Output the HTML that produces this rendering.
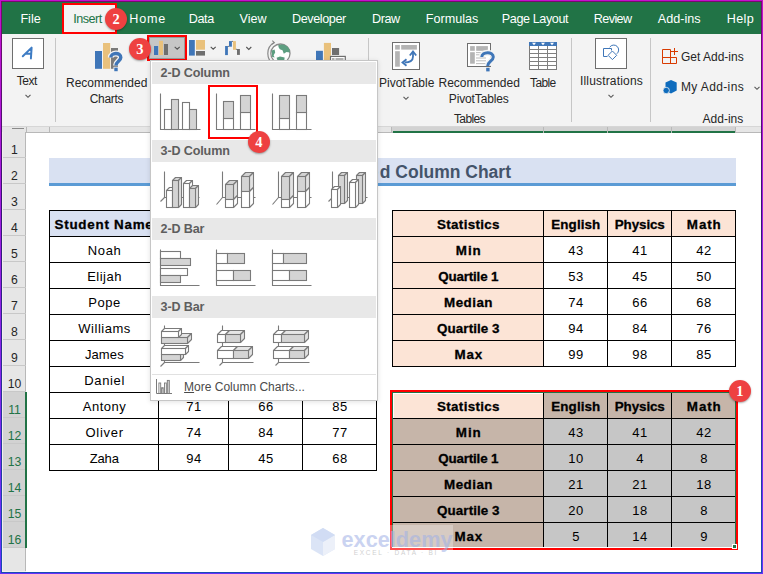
<!DOCTYPE html>
<html><head><meta charset="utf-8"><title>Excel</title><style>
*{margin:0;padding:0;box-sizing:border-box}
html,body{width:763px;height:574px;overflow:hidden;background:#fff;font-family:"Liberation Sans",sans-serif;position:relative}
.a{position:absolute}
.t{position:absolute;line-height:1;white-space:nowrap}
svg{position:absolute;overflow:visible}
</style></head><body>

<div class="a" style="left:0px;top:0px;width:763px;height:34px;background:#217346"></div>
<div class="a" style="left:63px;top:4px;width:53px;height:30px;background:#f3f3f3"></div>
<div class="t" style="left:20.40px;top:13.03px;font-size:12.6px;color:#fff;font-weight:normal;">File</div>
<div class="t" style="left:129.30px;top:13.03px;font-size:12.6px;color:#fff;font-weight:normal;letter-spacing:0.8px;">Home</div>
<div class="t" style="left:188.80px;top:13.03px;font-size:12.6px;color:#fff;font-weight:normal;letter-spacing:-0.4px;">Data</div>
<div class="t" style="left:239.50px;top:13.03px;font-size:12.6px;color:#fff;font-weight:normal;">View</div>
<div class="t" style="left:292.00px;top:13.03px;font-size:12.6px;color:#fff;font-weight:normal;letter-spacing:-0.4px;">Developer</div>
<div class="t" style="left:372.10px;top:13.03px;font-size:12.6px;color:#fff;font-weight:normal;letter-spacing:-0.43px;">Draw</div>
<div class="t" style="left:425.80px;top:13.03px;font-size:12.6px;color:#fff;font-weight:normal;">Formulas</div>
<div class="t" style="left:501.80px;top:13.03px;font-size:12.6px;color:#fff;font-weight:normal;letter-spacing:-0.4px;">Page Layout</div>
<div class="t" style="left:593.80px;top:13.03px;font-size:12.6px;color:#fff;font-weight:normal;letter-spacing:-0.6px;">Review</div>
<div class="t" style="left:657.80px;top:13.03px;font-size:12.6px;color:#fff;font-weight:normal;">Add-ins</div>
<div class="t" style="left:726.80px;top:13.03px;font-size:12.6px;color:#fff;font-weight:normal;letter-spacing:0.33px;">Help</div>
<div class="t" style="left:73.20px;top:13.03px;font-size:12.6px;color:#217346;font-weight:normal;letter-spacing:-0.5px;">Insert</div>
<div class="a" style="left:0px;top:34px;width:763px;height:92px;background:#f3f3f3"></div>
<div class="a" style="left:55.0px;top:38px;width:1px;height:84px;background:#c6c6c6"></div>
<div class="a" style="left:368.0px;top:38px;width:1px;height:84px;background:#c6c6c6"></div>
<div class="a" style="left:571.0px;top:38px;width:1px;height:84px;background:#c6c6c6"></div>
<div class="a" style="left:650.0px;top:38px;width:1px;height:84px;background:#c6c6c6"></div>
<div class="a" style="left:12px;top:38px;width:32px;height:31px;background:#fff;border:1px solid #6e6e6e"></div>
<svg style="left:12px;top:38px" width="32" height="31" viewBox="12 38 32 31"><path d="M22.8 56.2 L31.6 47.6 L30.9 58.4 M25.6 53.8 L31.2 53.8" fill="none" stroke="#3e7cc4" stroke-width="2" stroke-linecap="round" stroke-linejoin="round"/></svg>
<div class="t" style="left:16.80px;top:75.04px;font-size:12px;color:#262626;font-weight:normal;letter-spacing:-0.5px;">Text</div>
<svg style="left:23.5px;top:92.5px" width="8" height="6" viewBox="23.5 92.5 8 6"><path d="M25.0 94.3 L27.5 96.8 L30.0 94.3" fill="none" stroke="#555" stroke-width="1.1"/></svg>
<svg style="left:90px;top:38px" width="40" height="40" viewBox="90 38 40 40">
<rect x="95" y="51" width="7" height="17.8" fill="#3f76b8"/>
<rect x="103" y="43" width="7.2" height="25.8" fill="#e9c17c"/>
<rect x="111" y="48" width="7" height="20.8" fill="#7a7a7a"/>
<path d="M110.8 57.5 C110.8 52.5 120.8 52 120.8 57.5 C120.8 61 116 61.5 116 65.5" fill="none" stroke="#f3f3f3" stroke-width="6"/>
<path d="M110.8 57.5 C110.8 52.5 120.8 52 120.8 57.5 C120.8 61 116 61.5 116 65.5" fill="none" stroke="#3f76b8" stroke-width="3.4"/>
<rect x="113.5" y="66.8" width="5" height="5" fill="#f3f3f3"/>
<rect x="114.3" y="67.6" width="3.4" height="3.6" fill="#3f76b8"/>
</svg>
<div class="t" style="left:66.00px;top:76.74px;font-size:12px;color:#262626;font-weight:normal;">Recommended</div>
<div class="t" style="left:89.80px;top:92.54px;font-size:12px;color:#262626;font-weight:normal;letter-spacing:-0.34px;">Charts</div>
<div class="a" style="left:149px;top:37px;width:36px;height:22px;background:#c6c6c6;border:1px solid #9a9a9a"></div>
<div class="a" style="left:147px;top:35px;width:40px;height:26px;border:2px solid #ff0000"></div>
<svg style="left:150px;top:38px" width="40" height="22" viewBox="150 38 40 22">
<rect x="154" y="46" width="4.1" height="9" fill="#3f76b8"/>
<rect x="159" y="40.8" width="4" height="14.2" fill="#e9c17c"/>
<rect x="164" y="44" width="4" height="11" fill="#6f6f6f"/>
<path d="M174.7 46.8 L177.2 49.2 L179.7 46.8" fill="none" stroke="#555" stroke-width="1.1"/>
</svg>
<svg style="left:188px;top:38px" width="30" height="20" viewBox="188 38 30 20">
<rect x="189" y="40" width="5.8" height="15.6" fill="#3f76b8"/>
<rect x="196" y="40" width="9" height="9.7" fill="#e9c17c"/>
<rect x="196" y="51" width="9" height="4.6" fill="#6f6f6f"/>
<path d="M210.7 46.8 L213.2 49.2 L215.7 46.8" fill="none" stroke="#555" stroke-width="1.1"/>
</svg>
<svg style="left:224px;top:38px" width="30" height="20" viewBox="224 38 30 20">
<rect x="225.1" y="46" width="2.8" height="9.1" fill="#3f76b8"/>
<rect x="229" y="41.1" width="2.9" height="5.6" fill="#3f76b8"/>
<rect x="233" y="41.1" width="2.9" height="8.7" fill="#e9c17c"/>
<rect x="237" y="49" width="2.9" height="5.9" fill="#6f6f6f"/>
<path d="M227.9 46.4 H229 M231.9 41.4 H233 M235.9 49.3 H237" stroke="#555" stroke-width="0.8"/>
<path d="M246.3 47 L248.8 49.4 L251.3 47" fill="none" stroke="#555" stroke-width="1.1"/>
</svg>
<svg style="left:264px;top:38px" width="32" height="24" viewBox="264 38 32 24">
<path d="M274.05 42.57 A12.5 12.5 0 0 0 274.05 64.2" fill="none" stroke="#8a8a8a" stroke-width="1.2"/>
<path d="M272.3 40.6 L274.4 42.6 L272 44.2" fill="none" stroke="#8a8a8a" stroke-width="1.1"/>
<circle cx="280.4" cy="53.6" r="9.6" fill="#fff" stroke="#8a8a8a" stroke-width="1.3"/>
<path d="M278.2 45.2 C282 43.6 287.5 45 289.6 49.5 L289.8 52.5 L286.5 52 L283.8 53.8 L282.5 50.2 L279.8 49.2 L278.6 47.2 Z" fill="#5c9e80"/>
<path d="M271.6 50.5 L274.6 49.6 L275.2 52.6 L273.6 55.2 L274.6 57.6 L272 56.8 Z" fill="#5c9e80"/>
<path d="M276.6 57.8 L280 56.6 L284.6 57.6 L284.2 60.8 L277.6 60.8 Z" fill="#5c9e80"/>
</svg>
<svg style="left:314px;top:40px" width="34" height="22" viewBox="314 40 34 22">
<rect x="316" y="50.8" width="6.9" height="11" fill="#3f76b8"/>
<rect x="323.9" y="42.9" width="7.1" height="19" fill="#e9c17c"/>
<rect x="332" y="48" width="7.1" height="7" fill="#6f6f6f"/>
<rect x="329.9" y="55.8" width="16" height="8" fill="#fff"/>
<rect x="330.5" y="56.4" width="14.8" height="7" fill="none" stroke="#6f6f6f" stroke-width="1.2"/>
<rect x="332" y="58" width="2.5" height="4" fill="#b4b4b4"/>
<rect x="335.5" y="58" width="8" height="4" fill="#b4b4b4"/>
</svg>
<div class="a" style="left:392px;top:42px;width:28px;height:28px;background:#fff;border:1px solid #6e6e6e"></div>
<svg style="left:392px;top:42px" width="28" height="28" viewBox="392 42 28 28">
<rect x="395.1" y="45" width="4.7" height="4.6" fill="#b4b4b4"/>
<rect x="401.2" y="45" width="15.7" height="4.6" fill="#b4b4b4"/>
<rect x="395.1" y="51.2" width="4.7" height="15.5" fill="#b4b4b4"/>
<path d="M413 52.5 L413 56.5 C413 60 410 62.5 404.5 62.5" fill="none" stroke="#3f76b8" stroke-width="1.8"/>
<path d="M409.8 55.5 L413 51.5 L416.2 55.5" fill="none" stroke="#3f76b8" stroke-width="1.8"/>
<path d="M406.5 59.3 L402.5 62.5 L406.5 65.7" fill="none" stroke="#3f76b8" stroke-width="1.8"/>
</svg>
<div class="t" style="left:379.00px;top:76.94px;font-size:12px;color:#262626;font-weight:normal;">PivotTable</div>
<svg style="left:402.2px;top:95.2px" width="8" height="6" viewBox="402.2 95.2 8 6"><path d="M403.7 97.0 L406.2 99.5 L408.7 97.0" fill="none" stroke="#555" stroke-width="1.1"/></svg>
<svg style="left:466px;top:42px" width="30" height="32" viewBox="466 42 30 32">
<rect x="467.5" y="43.5" width="23" height="23" fill="#fff" stroke="#6e6e6e" stroke-width="1"/>
<rect x="470.1" y="46.1" width="4.7" height="4.7" fill="#b4b4b4"/>
<rect x="476.2" y="46.1" width="11.7" height="4.7" fill="#b4b4b4"/>
<rect x="470.1" y="52.2" width="4.7" height="11.5" fill="#b4b4b4"/>
<path d="M476 52.6 H483 M476 54.8 H482 M476 58 H486 M476 60.8 H486 M476 63.6 H486" stroke="#b4b4b4" stroke-width="0.9"/>
<path d="M481.8 57 C481.8 51.5 493.3 51 493.3 57 C493.3 61 487.7 61.5 487.7 66" fill="none" stroke="#f3f3f3" stroke-width="6"/>
<path d="M481.8 57 C481.8 51.5 493.3 51 493.3 57 C493.3 61 487.7 61.5 487.7 66" fill="none" stroke="#3f76b8" stroke-width="3"/>
<rect x="485.5" y="67" width="5" height="5.2" fill="#f3f3f3"/>
<rect x="486.2" y="67.8" width="3.4" height="3.6" fill="#3f76b8"/>
</svg>
<div class="t" style="left:438.50px;top:76.94px;font-size:12px;color:#262626;font-weight:normal;">Recommended</div>
<div class="t" style="left:448.80px;top:92.84px;font-size:12px;color:#262626;font-weight:normal;letter-spacing:-0.14px;">PivotTables</div>
<svg style="left:528px;top:40px" width="32" height="32" viewBox="528 40 32 32">
<rect x="529.5" y="42.5" width="27" height="27" fill="#fff" stroke="#7a7a7a" stroke-width="1"/>
<line x1="529.5" x2="556.5" y1="49.5" y2="49.5" stroke="#808080" stroke-width="1"/><line x1="529.5" x2="556.5" y1="53.5" y2="53.5" stroke="#808080" stroke-width="1"/><line x1="529.5" x2="556.5" y1="57.5" y2="57.5" stroke="#808080" stroke-width="1"/><line x1="529.5" x2="556.5" y1="61.5" y2="61.5" stroke="#808080" stroke-width="1"/><line x1="529.5" x2="556.5" y1="65.5" y2="65.5" stroke="#808080" stroke-width="1"/><line y1="46" y2="69.5" x1="538.5" x2="538.5" stroke="#808080" stroke-width="1"/><line y1="46" y2="69.5" x1="547.5" x2="547.5" stroke="#808080" stroke-width="1"/>
<rect x="529" y="42" width="28" height="4" fill="#3f76b8"/>
<path d="M532 42.8 L536 42.8 L534 45.2 Z M541 42.8 L545 42.8 L543 45.2 Z M550 42.8 L554 42.8 L552 45.2 Z" fill="#fff"/>
</svg>
<div class="t" style="left:530.00px;top:76.94px;font-size:12px;color:#262626;font-weight:normal;letter-spacing:-0.6px;">Table</div>
<div class="t" style="left:454.00px;top:112.64px;font-size:12px;color:#262626;font-weight:normal;letter-spacing:-0.64px;">Tables</div>
<div class="a" style="left:595px;top:38px;width:32px;height:31px;background:#fff;border:1px solid #6e6e6e"></div>
<svg style="left:595px;top:38px" width="32" height="31" viewBox="595 38 32 31">
<path d="M607.5 56.5 H603.5 V48.5 H611.5 V50.5" fill="none" stroke="#3f76b8" stroke-width="1"/>
<path d="M612.4 51 L616.7 55.3 L612.4 59.6 L608.1 55.3 Z" fill="none" stroke="#3f76b8" stroke-width="1"/>
<path d="M609.7 47.2 A4.9 4.9 0 1 1 616.85 53.75" fill="none" stroke="#3f76b8" stroke-width="1"/>
</svg>
<div class="t" style="left:580.00px;top:74.74px;font-size:12px;color:#262626;font-weight:normal;letter-spacing:0.17px;">Illustrations</div>
<svg style="left:606.5px;top:92.8px" width="8" height="6" viewBox="606.5 92.8 8 6"><path d="M608.0 94.6 L610.5 97.1 L613.0 94.6" fill="none" stroke="#555" stroke-width="1.1"/></svg>
<svg style="left:660px;top:46px" width="20" height="50" viewBox="660 46 20 50">
<path d="M662.5 49.5 V63.5 H676.5 V57.5 M662.5 49.5 H670.5 V63.5 M662.5 57.5 H676.5" fill="none" stroke="#d83b01" stroke-width="1"/>
<path d="M674.5 48 V55 M671 51.5 H678" fill="none" stroke="#d83b01" stroke-width="1"/>
<path d="M671 80 L676.7 82.5 V90.5 L671 93.5 L665.5 90.8 V82.5 Z" fill="#0f6cbd"/>
<circle cx="666.2" cy="90.5" r="3.2" fill="#0f6cbd" stroke="#f3f3f3" stroke-width="0.8"/>
</svg>
<div class="t" style="left:681.00px;top:50.64px;font-size:12px;color:#262626;font-weight:normal;">Get Add-ins</div>
<div class="t" style="left:681.00px;top:81.24px;font-size:12px;color:#262626;font-weight:normal;letter-spacing:0.37px;">My Add-ins</div>
<svg style="left:753px;top:84.5px" width="8" height="6" viewBox="753 84.5 8 6"><path d="M754.5 86.3 L757 88.8 L759.5 86.3" fill="none" stroke="#555" stroke-width="1.1"/></svg>
<div class="t" style="left:702.60px;top:112.64px;font-size:12px;color:#262626;font-weight:normal;">Add-ins</div>
<div class="a" style="left:0px;top:126px;width:763px;height:7px;background:#e6e6e6;border-top:1px solid #d6d6d6;border-bottom:1px solid #b8b8b8"></div>
<div class="a" style="left:392px;top:127px;width:344px;height:5px;background:#d2d2d2"></div>
<div class="a" style="left:393px;top:131px;width:343px;height:2px;background:#217346"></div>
<div class="a" style="left:26.0px;top:127px;width:1px;height:6px;background:#b8b8b8"></div>
<div class="a" style="left:48.8px;top:127px;width:1px;height:6px;background:#b8b8b8"></div>
<div class="a" style="left:157.5px;top:127px;width:1px;height:6px;background:#b8b8b8"></div>
<div class="a" style="left:227.5px;top:127px;width:1px;height:6px;background:#b8b8b8"></div>
<div class="a" style="left:301.5px;top:127px;width:1px;height:6px;background:#b8b8b8"></div>
<div class="a" style="left:375.5px;top:127px;width:1px;height:6px;background:#b8b8b8"></div>
<div class="a" style="left:390.5px;top:127px;width:1px;height:6px;background:#b8b8b8"></div>
<div class="a" style="left:543.0px;top:127px;width:1px;height:6px;background:#b8b8b8"></div>
<div class="a" style="left:607.0px;top:127px;width:1px;height:6px;background:#b8b8b8"></div>
<div class="a" style="left:671.0px;top:127px;width:1px;height:6px;background:#b8b8b8"></div>
<div class="a" style="left:735.0px;top:127px;width:1px;height:6px;background:#b8b8b8"></div>
<div class="a" style="left:12px;top:128px;width:12px;height:1px;background:#8a8a8a"></div>
<div class="a" style="left:2px;top:132px;width:24px;height:442px;background:#e6e6e6;border-right:1px solid #b8b8b8"></div>
<div class="a" style="left:2px;top:157px;width:24px;height:1px;background:#c8c8c8"></div>
<div class="t" style="left:2.50px;width:24px;text-align:center;top:143.67px;font-size:12.2px;color:#262626;font-weight:normal;">1</div>
<div class="a" style="left:2px;top:183px;width:24px;height:1px;background:#c8c8c8"></div>
<div class="t" style="left:2.50px;width:24px;text-align:center;top:169.67px;font-size:12.2px;color:#262626;font-weight:normal;">2</div>
<div class="a" style="left:2px;top:209px;width:24px;height:1px;background:#c8c8c8"></div>
<div class="t" style="left:2.50px;width:24px;text-align:center;top:195.67px;font-size:12.2px;color:#262626;font-weight:normal;">3</div>
<div class="a" style="left:2px;top:235px;width:24px;height:1px;background:#c8c8c8"></div>
<div class="t" style="left:2.50px;width:24px;text-align:center;top:221.67px;font-size:12.2px;color:#262626;font-weight:normal;">4</div>
<div class="a" style="left:2px;top:261px;width:24px;height:1px;background:#c8c8c8"></div>
<div class="t" style="left:2.50px;width:24px;text-align:center;top:247.67px;font-size:12.2px;color:#262626;font-weight:normal;">5</div>
<div class="a" style="left:2px;top:287px;width:24px;height:1px;background:#c8c8c8"></div>
<div class="t" style="left:2.50px;width:24px;text-align:center;top:273.67px;font-size:12.2px;color:#262626;font-weight:normal;">6</div>
<div class="a" style="left:2px;top:313px;width:24px;height:1px;background:#c8c8c8"></div>
<div class="t" style="left:2.50px;width:24px;text-align:center;top:299.67px;font-size:12.2px;color:#262626;font-weight:normal;">7</div>
<div class="a" style="left:2px;top:339px;width:24px;height:1px;background:#c8c8c8"></div>
<div class="t" style="left:2.50px;width:24px;text-align:center;top:325.67px;font-size:12.2px;color:#262626;font-weight:normal;">8</div>
<div class="a" style="left:2px;top:365px;width:24px;height:1px;background:#c8c8c8"></div>
<div class="t" style="left:2.50px;width:24px;text-align:center;top:351.67px;font-size:12.2px;color:#262626;font-weight:normal;">9</div>
<div class="a" style="left:2px;top:391px;width:24px;height:1px;background:#c8c8c8"></div>
<div class="t" style="left:2.50px;width:24px;text-align:center;top:377.67px;font-size:12.2px;color:#262626;font-weight:normal;">10</div>
<div class="a" style="left:2px;top:392px;width:24px;height:26px;background:#d2d2d2"></div>
<div class="a" style="left:2px;top:417px;width:24px;height:1px;background:#c8c8c8"></div>
<div class="t" style="left:2.50px;width:24px;text-align:center;top:403.67px;font-size:12.2px;color:#217346;font-weight:normal;">11</div>
<div class="a" style="left:2px;top:418px;width:24px;height:26px;background:#d2d2d2"></div>
<div class="a" style="left:2px;top:443px;width:24px;height:1px;background:#c8c8c8"></div>
<div class="t" style="left:2.50px;width:24px;text-align:center;top:429.67px;font-size:12.2px;color:#217346;font-weight:normal;">12</div>
<div class="a" style="left:2px;top:444px;width:24px;height:26px;background:#d2d2d2"></div>
<div class="a" style="left:2px;top:469px;width:24px;height:1px;background:#c8c8c8"></div>
<div class="t" style="left:2.50px;width:24px;text-align:center;top:455.67px;font-size:12.2px;color:#217346;font-weight:normal;">13</div>
<div class="a" style="left:2px;top:470px;width:24px;height:26px;background:#d2d2d2"></div>
<div class="a" style="left:2px;top:495px;width:24px;height:1px;background:#c8c8c8"></div>
<div class="t" style="left:2.50px;width:24px;text-align:center;top:481.67px;font-size:12.2px;color:#217346;font-weight:normal;">14</div>
<div class="a" style="left:2px;top:496px;width:24px;height:26px;background:#d2d2d2"></div>
<div class="a" style="left:2px;top:521px;width:24px;height:1px;background:#c8c8c8"></div>
<div class="t" style="left:2.50px;width:24px;text-align:center;top:507.67px;font-size:12.2px;color:#217346;font-weight:normal;">15</div>
<div class="a" style="left:2px;top:522px;width:24px;height:26px;background:#d2d2d2"></div>
<div class="a" style="left:2px;top:547px;width:24px;height:1px;background:#c8c8c8"></div>
<div class="t" style="left:2.50px;width:24px;text-align:center;top:533.67px;font-size:12.2px;color:#217346;font-weight:normal;">16</div>
<div class="a" style="left:25px;top:392px;width:2px;height:156px;background:#217346"></div>
<div class="a" style="left:49px;top:158px;width:687px;height:25px;background:#d9e1f2"></div>
<div class="a" style="left:49px;top:183px;width:687px;height:3px;background:#5b9bd5"></div>
<div class="t" style="left:11.00px;width:500px;text-align:right;top:163.79px;font-size:17.5px;color:#44546a;font-weight:bold;">Box Plot Using Stacke<span style="margin-left:1.5px"></span>d Column Chart</div>
<div class="a" style="left:49px;top:210px;width:109px;height:26px;background:#d9e1f2"></div>
<div class="t" style="left:54.50px;top:217.66px;font-size:13.4px;color:#000;font-weight:bold;letter-spacing:0.75px;-webkit-text-stroke:0.3px #000;">Student Name</div>
<div class="a" style="left:158px;top:210px;width:70px;height:26px;background:#d9e1f2"></div>
<div class="t" style="left:158.75px;width:70px;text-align:center;top:217.66px;font-size:13.4px;color:#000;font-weight:bold;letter-spacing:-0.1px;-webkit-text-stroke:0.3px #000;">Physics</div>
<div class="a" style="left:228px;top:210px;width:74px;height:26px;background:#d9e1f2"></div>
<div class="t" style="left:229.00px;width:74px;text-align:center;top:217.66px;font-size:13.4px;color:#000;font-weight:bold;letter-spacing:0.4px;-webkit-text-stroke:0.3px #000;">Chemistry</div>
<div class="a" style="left:302px;top:210px;width:74px;height:26px;background:#d9e1f2"></div>
<div class="t" style="left:303.25px;width:74px;text-align:center;top:217.66px;font-size:13.4px;color:#000;font-weight:bold;letter-spacing:0.9px;-webkit-text-stroke:0.3px #000;">Math</div>
<div class="t" style="left:50.10px;width:109px;text-align:center;top:244.00px;font-size:13px;color:#000;font-weight:normal;letter-spacing:0.6px;">Noah</div>
<div class="t" style="left:159.05px;width:70px;text-align:center;top:244.00px;font-size:13px;color:#000;font-weight:normal;letter-spacing:0.5px;">0</div>
<div class="t" style="left:229.05px;width:74px;text-align:center;top:244.00px;font-size:13px;color:#000;font-weight:normal;letter-spacing:0.5px;">0</div>
<div class="t" style="left:303.05px;width:74px;text-align:center;top:244.00px;font-size:13px;color:#000;font-weight:normal;letter-spacing:0.5px;">0</div>
<div class="t" style="left:50.05px;width:109px;text-align:center;top:270.00px;font-size:13px;color:#000;font-weight:normal;letter-spacing:0.5px;">Elijah</div>
<div class="t" style="left:159.05px;width:70px;text-align:center;top:270.00px;font-size:13px;color:#000;font-weight:normal;letter-spacing:0.5px;">0</div>
<div class="t" style="left:229.05px;width:74px;text-align:center;top:270.00px;font-size:13px;color:#000;font-weight:normal;letter-spacing:0.5px;">0</div>
<div class="t" style="left:303.05px;width:74px;text-align:center;top:270.00px;font-size:13px;color:#000;font-weight:normal;letter-spacing:0.5px;">0</div>
<div class="t" style="left:50.05px;width:109px;text-align:center;top:296.00px;font-size:13px;color:#000;font-weight:normal;letter-spacing:0.5px;">Pope</div>
<div class="t" style="left:159.05px;width:70px;text-align:center;top:296.00px;font-size:13px;color:#000;font-weight:normal;letter-spacing:0.5px;">0</div>
<div class="t" style="left:229.05px;width:74px;text-align:center;top:296.00px;font-size:13px;color:#000;font-weight:normal;letter-spacing:0.5px;">0</div>
<div class="t" style="left:303.05px;width:74px;text-align:center;top:296.00px;font-size:13px;color:#000;font-weight:normal;letter-spacing:0.5px;">0</div>
<div class="t" style="left:50.05px;width:109px;text-align:center;top:322.00px;font-size:13px;color:#000;font-weight:normal;letter-spacing:0.5px;">Williams</div>
<div class="t" style="left:159.05px;width:70px;text-align:center;top:322.00px;font-size:13px;color:#000;font-weight:normal;letter-spacing:0.5px;">0</div>
<div class="t" style="left:229.05px;width:74px;text-align:center;top:322.00px;font-size:13px;color:#000;font-weight:normal;letter-spacing:0.5px;">0</div>
<div class="t" style="left:303.05px;width:74px;text-align:center;top:322.00px;font-size:13px;color:#000;font-weight:normal;letter-spacing:0.5px;">0</div>
<div class="t" style="left:49.85px;width:109px;text-align:center;top:348.00px;font-size:13px;color:#000;font-weight:normal;letter-spacing:0.1px;">James</div>
<div class="t" style="left:159.05px;width:70px;text-align:center;top:348.00px;font-size:13px;color:#000;font-weight:normal;letter-spacing:0.5px;">0</div>
<div class="t" style="left:229.05px;width:74px;text-align:center;top:348.00px;font-size:13px;color:#000;font-weight:normal;letter-spacing:0.5px;">0</div>
<div class="t" style="left:303.05px;width:74px;text-align:center;top:348.00px;font-size:13px;color:#000;font-weight:normal;letter-spacing:0.5px;">0</div>
<div class="t" style="left:50.12px;width:109px;text-align:center;top:374.00px;font-size:13px;color:#000;font-weight:normal;letter-spacing:0.65px;">Daniel</div>
<div class="t" style="left:159.05px;width:70px;text-align:center;top:374.00px;font-size:13px;color:#000;font-weight:normal;letter-spacing:0.5px;">0</div>
<div class="t" style="left:229.05px;width:74px;text-align:center;top:374.00px;font-size:13px;color:#000;font-weight:normal;letter-spacing:0.5px;">0</div>
<div class="t" style="left:303.05px;width:74px;text-align:center;top:374.00px;font-size:13px;color:#000;font-weight:normal;letter-spacing:0.5px;">0</div>
<div class="t" style="left:50.05px;width:109px;text-align:center;top:400.00px;font-size:13px;color:#000;font-weight:normal;letter-spacing:0.5px;">Antony</div>
<div class="t" style="left:159.05px;width:70px;text-align:center;top:400.00px;font-size:13px;color:#000;font-weight:normal;letter-spacing:0.5px;">71</div>
<div class="t" style="left:229.05px;width:74px;text-align:center;top:400.00px;font-size:13px;color:#000;font-weight:normal;letter-spacing:0.5px;">66</div>
<div class="t" style="left:303.05px;width:74px;text-align:center;top:400.00px;font-size:13px;color:#000;font-weight:normal;letter-spacing:0.5px;">85</div>
<div class="t" style="left:50.17px;width:109px;text-align:center;top:426.00px;font-size:13px;color:#000;font-weight:normal;letter-spacing:0.75px;">Oliver</div>
<div class="t" style="left:159.05px;width:70px;text-align:center;top:426.00px;font-size:13px;color:#000;font-weight:normal;letter-spacing:0.5px;">74</div>
<div class="t" style="left:229.05px;width:74px;text-align:center;top:426.00px;font-size:13px;color:#000;font-weight:normal;letter-spacing:0.5px;">84</div>
<div class="t" style="left:303.05px;width:74px;text-align:center;top:426.00px;font-size:13px;color:#000;font-weight:normal;letter-spacing:0.5px;">77</div>
<div class="t" style="left:49.75px;width:109px;text-align:center;top:452.00px;font-size:13px;color:#000;font-weight:normal;letter-spacing:-0.1px;">Zaha</div>
<div class="t" style="left:159.05px;width:70px;text-align:center;top:452.00px;font-size:13px;color:#000;font-weight:normal;letter-spacing:0.5px;">94</div>
<div class="t" style="left:229.05px;width:74px;text-align:center;top:452.00px;font-size:13px;color:#000;font-weight:normal;letter-spacing:0.5px;">45</div>
<div class="t" style="left:303.05px;width:74px;text-align:center;top:452.00px;font-size:13px;color:#000;font-weight:normal;letter-spacing:0.5px;">68</div>
<div class="a" style="left:49px;top:210px;width:328px;height:1px;background:#000"></div>
<div class="a" style="left:49px;top:236px;width:328px;height:1px;background:#000"></div>
<div class="a" style="left:49px;top:262px;width:328px;height:1px;background:#000"></div>
<div class="a" style="left:49px;top:288px;width:328px;height:1px;background:#000"></div>
<div class="a" style="left:49px;top:314px;width:328px;height:1px;background:#000"></div>
<div class="a" style="left:49px;top:340px;width:328px;height:1px;background:#000"></div>
<div class="a" style="left:49px;top:366px;width:328px;height:1px;background:#000"></div>
<div class="a" style="left:49px;top:392px;width:328px;height:1px;background:#000"></div>
<div class="a" style="left:49px;top:418px;width:328px;height:1px;background:#000"></div>
<div class="a" style="left:49px;top:444px;width:328px;height:1px;background:#000"></div>
<div class="a" style="left:49px;top:470px;width:328px;height:1px;background:#000"></div>
<div class="a" style="left:49px;top:210px;width:1px;height:261px;background:#000"></div>
<div class="a" style="left:158px;top:210px;width:1px;height:261px;background:#000"></div>
<div class="a" style="left:228px;top:210px;width:1px;height:261px;background:#000"></div>
<div class="a" style="left:302px;top:210px;width:1px;height:261px;background:#000"></div>
<div class="a" style="left:376px;top:210px;width:1px;height:261px;background:#000"></div>
<div class="a" style="left:392px;top:210px;width:151px;height:26px;background:#fce4d6"></div>
<div class="t" style="left:392.97px;width:151px;text-align:center;top:217.66px;font-size:13.4px;color:#000;font-weight:bold;letter-spacing:0.33px;-webkit-text-stroke:0.3px #000;">Statistics</div>
<div class="a" style="left:543px;top:210px;width:64px;height:26px;background:#fce4d6"></div>
<div class="t" style="left:543.85px;width:64px;text-align:center;top:217.66px;font-size:13.4px;color:#000;font-weight:bold;letter-spacing:0.1px;-webkit-text-stroke:0.3px #000;">English</div>
<div class="a" style="left:607px;top:210px;width:64px;height:26px;background:#fce4d6"></div>
<div class="t" style="left:607.75px;width:64px;text-align:center;top:217.66px;font-size:13.4px;color:#000;font-weight:bold;letter-spacing:-0.1px;-webkit-text-stroke:0.3px #000;">Physics</div>
<div class="a" style="left:671px;top:210px;width:64px;height:26px;background:#fce4d6"></div>
<div class="t" style="left:672.25px;width:64px;text-align:center;top:217.66px;font-size:13.4px;color:#000;font-weight:bold;letter-spacing:0.9px;-webkit-text-stroke:0.3px #000;">Math</div>
<div class="a" style="left:392px;top:236px;width:151px;height:26px;background:#fce4d6"></div>
<div class="t" style="left:393.25px;width:151px;text-align:center;top:243.66px;font-size:13.4px;color:#000;font-weight:bold;letter-spacing:0.9px;-webkit-text-stroke:0.3px #000;">Min</div>
<div class="t" style="left:544.05px;width:64px;text-align:center;top:244.00px;font-size:13px;color:#000;font-weight:normal;letter-spacing:0.5px;">43</div>
<div class="t" style="left:608.05px;width:64px;text-align:center;top:244.00px;font-size:13px;color:#000;font-weight:normal;letter-spacing:0.5px;">41</div>
<div class="t" style="left:672.05px;width:64px;text-align:center;top:244.00px;font-size:13px;color:#000;font-weight:normal;letter-spacing:0.5px;">42</div>
<div class="a" style="left:392px;top:262px;width:151px;height:26px;background:#fce4d6"></div>
<div class="t" style="left:392.72px;width:151px;text-align:center;top:269.66px;font-size:13.4px;color:#000;font-weight:bold;letter-spacing:-0.16px;-webkit-text-stroke:0.3px #000;">Quartile 1</div>
<div class="t" style="left:544.05px;width:64px;text-align:center;top:270.00px;font-size:13px;color:#000;font-weight:normal;letter-spacing:0.5px;">53</div>
<div class="t" style="left:608.05px;width:64px;text-align:center;top:270.00px;font-size:13px;color:#000;font-weight:normal;letter-spacing:0.5px;">45</div>
<div class="t" style="left:672.05px;width:64px;text-align:center;top:270.00px;font-size:13px;color:#000;font-weight:normal;letter-spacing:0.5px;">50</div>
<div class="a" style="left:392px;top:288px;width:151px;height:26px;background:#fce4d6"></div>
<div class="t" style="left:393.03px;width:151px;text-align:center;top:295.66px;font-size:13.4px;color:#000;font-weight:bold;letter-spacing:0.46px;-webkit-text-stroke:0.3px #000;">Median</div>
<div class="t" style="left:544.05px;width:64px;text-align:center;top:296.00px;font-size:13px;color:#000;font-weight:normal;letter-spacing:0.5px;">74</div>
<div class="t" style="left:608.05px;width:64px;text-align:center;top:296.00px;font-size:13px;color:#000;font-weight:normal;letter-spacing:0.5px;">66</div>
<div class="t" style="left:672.05px;width:64px;text-align:center;top:296.00px;font-size:13px;color:#000;font-weight:normal;letter-spacing:0.5px;">68</div>
<div class="a" style="left:392px;top:314px;width:151px;height:26px;background:#fce4d6"></div>
<div class="t" style="left:392.84px;width:151px;text-align:center;top:321.66px;font-size:13.4px;color:#000;font-weight:bold;letter-spacing:0.07px;-webkit-text-stroke:0.3px #000;">Quartile 3</div>
<div class="t" style="left:544.05px;width:64px;text-align:center;top:322.00px;font-size:13px;color:#000;font-weight:normal;letter-spacing:0.5px;">94</div>
<div class="t" style="left:608.05px;width:64px;text-align:center;top:322.00px;font-size:13px;color:#000;font-weight:normal;letter-spacing:0.5px;">84</div>
<div class="t" style="left:672.05px;width:64px;text-align:center;top:322.00px;font-size:13px;color:#000;font-weight:normal;letter-spacing:0.5px;">76</div>
<div class="a" style="left:392px;top:340px;width:151px;height:26px;background:#fce4d6"></div>
<div class="t" style="left:393.25px;width:151px;text-align:center;top:347.66px;font-size:13.4px;color:#000;font-weight:bold;letter-spacing:0.9px;-webkit-text-stroke:0.3px #000;">Max</div>
<div class="t" style="left:544.05px;width:64px;text-align:center;top:348.00px;font-size:13px;color:#000;font-weight:normal;letter-spacing:0.5px;">99</div>
<div class="t" style="left:608.05px;width:64px;text-align:center;top:348.00px;font-size:13px;color:#000;font-weight:normal;letter-spacing:0.5px;">98</div>
<div class="t" style="left:672.05px;width:64px;text-align:center;top:348.00px;font-size:13px;color:#000;font-weight:normal;letter-spacing:0.5px;">85</div>
<div class="a" style="left:392px;top:210px;width:344px;height:1px;background:#000"></div>
<div class="a" style="left:392px;top:236px;width:344px;height:1px;background:#000"></div>
<div class="a" style="left:392px;top:262px;width:344px;height:1px;background:#000"></div>
<div class="a" style="left:392px;top:288px;width:344px;height:1px;background:#000"></div>
<div class="a" style="left:392px;top:314px;width:344px;height:1px;background:#000"></div>
<div class="a" style="left:392px;top:340px;width:344px;height:1px;background:#000"></div>
<div class="a" style="left:392px;top:366px;width:344px;height:1px;background:#000"></div>
<div class="a" style="left:392px;top:210px;width:1px;height:157px;background:#000"></div>
<div class="a" style="left:543px;top:210px;width:1px;height:157px;background:#000"></div>
<div class="a" style="left:607px;top:210px;width:1px;height:157px;background:#000"></div>
<div class="a" style="left:671px;top:210px;width:1px;height:157px;background:#000"></div>
<div class="a" style="left:735px;top:210px;width:1px;height:157px;background:#000"></div>
<div class="a" style="left:392px;top:392px;width:151px;height:26px;background:#fce4d6"></div>
<div class="t" style="left:392.97px;width:151px;text-align:center;top:399.66px;font-size:13.4px;color:#000;font-weight:bold;letter-spacing:0.33px;-webkit-text-stroke:0.3px #000;">Statistics</div>
<div class="a" style="left:543px;top:392px;width:64px;height:26px;background:#c6b5a9"></div>
<div class="t" style="left:543.85px;width:64px;text-align:center;top:399.66px;font-size:13.4px;color:#000;font-weight:bold;letter-spacing:0.1px;-webkit-text-stroke:0.3px #000;">English</div>
<div class="a" style="left:607px;top:392px;width:64px;height:26px;background:#c6b5a9"></div>
<div class="t" style="left:607.75px;width:64px;text-align:center;top:399.66px;font-size:13.4px;color:#000;font-weight:bold;letter-spacing:-0.1px;-webkit-text-stroke:0.3px #000;">Physics</div>
<div class="a" style="left:671px;top:392px;width:64px;height:26px;background:#c6b5a9"></div>
<div class="t" style="left:672.25px;width:64px;text-align:center;top:399.66px;font-size:13.4px;color:#000;font-weight:bold;letter-spacing:0.9px;-webkit-text-stroke:0.3px #000;">Math</div>
<div class="a" style="left:392px;top:418px;width:151px;height:26px;background:#c6b5a9"></div>
<div class="t" style="left:393.25px;width:151px;text-align:center;top:425.66px;font-size:13.4px;color:#000;font-weight:bold;letter-spacing:0.9px;-webkit-text-stroke:0.3px #000;">Min</div>
<div class="a" style="left:543px;top:418px;width:64px;height:26px;background:#c6c6c6"></div>
<div class="t" style="left:544.05px;width:64px;text-align:center;top:426.00px;font-size:13px;color:#000;font-weight:normal;letter-spacing:0.5px;">43</div>
<div class="a" style="left:607px;top:418px;width:64px;height:26px;background:#c6c6c6"></div>
<div class="t" style="left:608.05px;width:64px;text-align:center;top:426.00px;font-size:13px;color:#000;font-weight:normal;letter-spacing:0.5px;">41</div>
<div class="a" style="left:671px;top:418px;width:64px;height:26px;background:#c6c6c6"></div>
<div class="t" style="left:672.05px;width:64px;text-align:center;top:426.00px;font-size:13px;color:#000;font-weight:normal;letter-spacing:0.5px;">42</div>
<div class="a" style="left:392px;top:444px;width:151px;height:26px;background:#c6b5a9"></div>
<div class="t" style="left:392.72px;width:151px;text-align:center;top:451.66px;font-size:13.4px;color:#000;font-weight:bold;letter-spacing:-0.16px;-webkit-text-stroke:0.3px #000;">Quartile 1</div>
<div class="a" style="left:543px;top:444px;width:64px;height:26px;background:#c6c6c6"></div>
<div class="t" style="left:544.05px;width:64px;text-align:center;top:452.00px;font-size:13px;color:#000;font-weight:normal;letter-spacing:0.5px;">10</div>
<div class="a" style="left:607px;top:444px;width:64px;height:26px;background:#c6c6c6"></div>
<div class="t" style="left:608.05px;width:64px;text-align:center;top:452.00px;font-size:13px;color:#000;font-weight:normal;letter-spacing:0.5px;">4</div>
<div class="a" style="left:671px;top:444px;width:64px;height:26px;background:#c6c6c6"></div>
<div class="t" style="left:672.05px;width:64px;text-align:center;top:452.00px;font-size:13px;color:#000;font-weight:normal;letter-spacing:0.5px;">8</div>
<div class="a" style="left:392px;top:470px;width:151px;height:26px;background:#c6b5a9"></div>
<div class="t" style="left:393.03px;width:151px;text-align:center;top:477.66px;font-size:13.4px;color:#000;font-weight:bold;letter-spacing:0.46px;-webkit-text-stroke:0.3px #000;">Median</div>
<div class="a" style="left:543px;top:470px;width:64px;height:26px;background:#c6c6c6"></div>
<div class="t" style="left:544.05px;width:64px;text-align:center;top:478.00px;font-size:13px;color:#000;font-weight:normal;letter-spacing:0.5px;">21</div>
<div class="a" style="left:607px;top:470px;width:64px;height:26px;background:#c6c6c6"></div>
<div class="t" style="left:608.05px;width:64px;text-align:center;top:478.00px;font-size:13px;color:#000;font-weight:normal;letter-spacing:0.5px;">21</div>
<div class="a" style="left:671px;top:470px;width:64px;height:26px;background:#c6c6c6"></div>
<div class="t" style="left:672.05px;width:64px;text-align:center;top:478.00px;font-size:13px;color:#000;font-weight:normal;letter-spacing:0.5px;">18</div>
<div class="a" style="left:392px;top:496px;width:151px;height:26px;background:#c6b5a9"></div>
<div class="t" style="left:392.84px;width:151px;text-align:center;top:503.66px;font-size:13.4px;color:#000;font-weight:bold;letter-spacing:0.07px;-webkit-text-stroke:0.3px #000;">Quartile 3</div>
<div class="a" style="left:543px;top:496px;width:64px;height:26px;background:#c6c6c6"></div>
<div class="t" style="left:544.05px;width:64px;text-align:center;top:504.00px;font-size:13px;color:#000;font-weight:normal;letter-spacing:0.5px;">20</div>
<div class="a" style="left:607px;top:496px;width:64px;height:26px;background:#c6c6c6"></div>
<div class="t" style="left:608.05px;width:64px;text-align:center;top:504.00px;font-size:13px;color:#000;font-weight:normal;letter-spacing:0.5px;">18</div>
<div class="a" style="left:671px;top:496px;width:64px;height:26px;background:#c6c6c6"></div>
<div class="t" style="left:672.05px;width:64px;text-align:center;top:504.00px;font-size:13px;color:#000;font-weight:normal;letter-spacing:0.5px;">8</div>
<div class="a" style="left:392px;top:522px;width:151px;height:26px;background:#c6b5a9"></div>
<div class="t" style="left:393.25px;width:151px;text-align:center;top:529.66px;font-size:13.4px;color:#000;font-weight:bold;letter-spacing:0.9px;-webkit-text-stroke:0.3px #000;">Max</div>
<div class="a" style="left:543px;top:522px;width:64px;height:26px;background:#c6c6c6"></div>
<div class="t" style="left:544.05px;width:64px;text-align:center;top:530.00px;font-size:13px;color:#000;font-weight:normal;letter-spacing:0.5px;">5</div>
<div class="a" style="left:607px;top:522px;width:64px;height:26px;background:#c6c6c6"></div>
<div class="t" style="left:608.05px;width:64px;text-align:center;top:530.00px;font-size:13px;color:#000;font-weight:normal;letter-spacing:0.5px;">14</div>
<div class="a" style="left:671px;top:522px;width:64px;height:26px;background:#c6c6c6"></div>
<div class="t" style="left:672.05px;width:64px;text-align:center;top:530.00px;font-size:13px;color:#000;font-weight:normal;letter-spacing:0.5px;">9</div>
<div class="a" style="left:392px;top:392px;width:344px;height:1px;background:#000"></div>
<div class="a" style="left:392px;top:418px;width:344px;height:1px;background:#000"></div>
<div class="a" style="left:392px;top:444px;width:344px;height:1px;background:#000"></div>
<div class="a" style="left:392px;top:470px;width:344px;height:1px;background:#000"></div>
<div class="a" style="left:392px;top:496px;width:344px;height:1px;background:#000"></div>
<div class="a" style="left:392px;top:522px;width:344px;height:1px;background:#000"></div>
<div class="a" style="left:392px;top:548px;width:344px;height:1px;background:#000"></div>
<div class="a" style="left:392px;top:392px;width:1px;height:157px;background:#000"></div>
<div class="a" style="left:543px;top:392px;width:1px;height:157px;background:#000"></div>
<div class="a" style="left:607px;top:392px;width:1px;height:157px;background:#000"></div>
<div class="a" style="left:671px;top:392px;width:1px;height:157px;background:#000"></div>
<div class="a" style="left:735px;top:392px;width:1px;height:157px;background:#000"></div>
<div class="a" style="left:390px;top:390px;width:348px;height:160px;border:2px solid #ff0000"></div>
<div class="a" style="left:392px;top:392px;width:344px;height:155px;border:1px solid #217346;border-bottom:none"></div>
<div class="a" style="left:392px;top:547px;width:344px;height:1px;background:#fff"></div>
<div class="a" style="left:732px;top:544px;width:5px;height:5px;background:#217346;border:1px solid #fff"></div>
<div class="a" style="left:393px;top:393px;width:150px;height:25px;border:1px solid #fff;border-right:none;border-bottom:none"></div>
<div class="a" style="left:150px;top:60px;width:228px;height:341px;background:#fff;border:1px solid #c6c6c6;box-shadow:0 1px 5px rgba(0,0,0,0.12)"></div>
<div class="a" style="left:152px;top:62px;width:224px;height:22px;background:#e8e8e8"></div>
<div class="t" style="left:160.60px;top:67.33px;font-size:12.6px;color:#5e5e5e;font-weight:bold;letter-spacing:-0.15px;">2-D Column</div>
<div class="a" style="left:152px;top:140px;width:224px;height:22px;background:#e8e8e8"></div>
<div class="t" style="left:160.60px;top:145.33px;font-size:12.6px;color:#5e5e5e;font-weight:bold;letter-spacing:-0.15px;">3-D Column</div>
<div class="a" style="left:152px;top:218px;width:224px;height:22px;background:#e8e8e8"></div>
<div class="t" style="left:160.60px;top:223.33px;font-size:12.6px;color:#5e5e5e;font-weight:bold;letter-spacing:-0.15px;">2-D Bar</div>
<div class="a" style="left:152px;top:296px;width:224px;height:22px;background:#e8e8e8"></div>
<div class="t" style="left:160.60px;top:301.33px;font-size:12.6px;color:#5e5e5e;font-weight:bold;letter-spacing:-0.15px;">3-D Bar</div>
<svg style="left:150px;top:60px" width="228" height="340" viewBox="150 60 228 340"><path d="M160.5 93.5 L160.5 129.5 L200.5 129.5" fill="none" stroke="#7a7a7a" stroke-width="1.1"/><rect x="164.5" y="109.5" width="7.0" height="20.0" fill="#fff" stroke="#7a7a7a" stroke-width="1.1"/><rect x="171.5" y="99.5" width="7.0" height="30.0" fill="#d4d4d4" stroke="#7a7a7a" stroke-width="1.1"/><rect x="182.5" y="102.5" width="7.0" height="27.0" fill="#fff" stroke="#7a7a7a" stroke-width="1.1"/><rect x="189.5" y="109.5" width="7.0" height="20.0" fill="#d4d4d4" stroke="#7a7a7a" stroke-width="1.1"/><path d="M216.5 93.5 L216.5 129.5 L255.5 129.5" fill="none" stroke="#7a7a7a" stroke-width="1.1"/><rect x="223.5" y="118.5" width="10.0" height="11.0" fill="#fff" stroke="#7a7a7a" stroke-width="1.1"/><rect x="223.5" y="101.5" width="10.0" height="17.0" fill="#d4d4d4" stroke="#7a7a7a" stroke-width="1.1"/><rect x="240.5" y="112.5" width="10.0" height="17.0" fill="#fff" stroke="#7a7a7a" stroke-width="1.1"/><rect x="240.5" y="95.5" width="10.0" height="17.0" fill="#d4d4d4" stroke="#7a7a7a" stroke-width="1.1"/><path d="M272.5 93.5 L272.5 129.5 L311.5 129.5" fill="none" stroke="#7a7a7a" stroke-width="1.1"/><rect x="279.5" y="118.5" width="10.0" height="11.0" fill="#fff" stroke="#7a7a7a" stroke-width="1.1"/><rect x="279.5" y="95.5" width="10.0" height="23.0" fill="#d4d4d4" stroke="#7a7a7a" stroke-width="1.1"/><rect x="296.5" y="112.5" width="10.0" height="17.0" fill="#fff" stroke="#7a7a7a" stroke-width="1.1"/><rect x="296.5" y="95.5" width="10.0" height="17.0" fill="#d4d4d4" stroke="#7a7a7a" stroke-width="1.1"/><path d="M164.5 171.5 L164.5 197.5 L199.5 197.5" fill="none" stroke="#7a7a7a" stroke-width="1.1"/><path d="M164.5 197.5 L160.5 201.5" fill="none" stroke="#7a7a7a" stroke-width="1.1"/><path d="M166.5 190.5 L169.5 187.5 L175.5 187.5 L172.5 190.5 Z" fill="#fff" stroke="#7a7a7a" stroke-width="1.1" stroke-linejoin="round"/><path d="M172.5 190.5 L175.5 187.5 L175.5 204.5 L172.5 207.5 Z" fill="#fff" stroke="#7a7a7a" stroke-width="1.1" stroke-linejoin="round"/><rect x="166.5" y="190.5" width="6.0" height="17.0" fill="#fff" stroke="#7a7a7a" stroke-width="1.1"/><path d="M172.5 180.5 L175.5 177.5 L181.5 177.5 L178.5 180.5 Z" fill="#d4d4d4" stroke="#7a7a7a" stroke-width="1.1" stroke-linejoin="round"/><path d="M178.5 180.5 L181.5 177.5 L181.5 204.5 L178.5 207.5 Z" fill="#e2e2e2" stroke="#7a7a7a" stroke-width="1.1" stroke-linejoin="round"/><rect x="172.5" y="180.5" width="6.0" height="27.0" fill="#d4d4d4" stroke="#7a7a7a" stroke-width="1.1"/><path d="M183.5 183.5 L186.5 180.5 L192.5 180.5 L189.5 183.5 Z" fill="#fff" stroke="#7a7a7a" stroke-width="1.1" stroke-linejoin="round"/><path d="M189.5 183.5 L192.5 180.5 L192.5 204.5 L189.5 207.5 Z" fill="#fff" stroke="#7a7a7a" stroke-width="1.1" stroke-linejoin="round"/><rect x="183.5" y="183.5" width="6.0" height="24.0" fill="#fff" stroke="#7a7a7a" stroke-width="1.1"/><path d="M189.5 188.5 L192.5 185.5 L198.5 185.5 L195.5 188.5 Z" fill="#d4d4d4" stroke="#7a7a7a" stroke-width="1.1" stroke-linejoin="round"/><path d="M195.5 188.5 L198.5 185.5 L198.5 204.5 L195.5 207.5 Z" fill="#e2e2e2" stroke="#7a7a7a" stroke-width="1.1" stroke-linejoin="round"/><rect x="189.5" y="188.5" width="6.0" height="19.0" fill="#d4d4d4" stroke="#7a7a7a" stroke-width="1.1"/><path d="M222.5 171.5 L222.5 197.5 L255.5 197.5" fill="none" stroke="#7a7a7a" stroke-width="1.1"/><path d="M222.5 197.5 L216.5 204.5" fill="none" stroke="#7a7a7a" stroke-width="1.1"/><path d="M278.5 171.5 L278.5 197.5 L311.5 197.5" fill="none" stroke="#7a7a7a" stroke-width="1.1"/><path d="M278.5 197.5 L272.5 204.5" fill="none" stroke="#7a7a7a" stroke-width="1.1"/><path d="M225.5 184.5 L229.5 180.5 L237.5 180.5 L233.5 184.5 Z" fill="#d4d4d4" stroke="#7a7a7a" stroke-width="1.1" stroke-linejoin="round"/><path d="M233.5 184.5 L237.5 180.5 L237.5 195.5 L233.5 199.5 Z" fill="#e2e2e2" stroke="#7a7a7a" stroke-width="1.1" stroke-linejoin="round"/><path d="M233.5 199.5 L237.5 195.5 L237.5 203.5 L233.5 207.5 Z" fill="#fff" stroke="#7a7a7a" stroke-width="1.1" stroke-linejoin="round"/><rect x="225.5" y="184.5" width="8.0" height="15.0" fill="#d4d4d4" stroke="#7a7a7a" stroke-width="1.1"/><rect x="225.5" y="199.5" width="8.0" height="8.0" fill="#fff" stroke="#7a7a7a" stroke-width="1.1"/><path d="M241.5 176.5 L245.5 172.5 L253.5 172.5 L249.5 176.5 Z" fill="#d4d4d4" stroke="#7a7a7a" stroke-width="1.1" stroke-linejoin="round"/><path d="M249.5 176.5 L253.5 172.5 L253.5 187.5 L249.5 191.5 Z" fill="#e2e2e2" stroke="#7a7a7a" stroke-width="1.1" stroke-linejoin="round"/><path d="M249.5 191.5 L253.5 187.5 L253.5 203.5 L249.5 207.5 Z" fill="#fff" stroke="#7a7a7a" stroke-width="1.1" stroke-linejoin="round"/><rect x="241.5" y="176.5" width="8.0" height="15.0" fill="#d4d4d4" stroke="#7a7a7a" stroke-width="1.1"/><rect x="241.5" y="191.5" width="8.0" height="16.0" fill="#fff" stroke="#7a7a7a" stroke-width="1.1"/><path d="M281.5 176.5 L285.5 172.5 L293.5 172.5 L289.5 176.5 Z" fill="#d4d4d4" stroke="#7a7a7a" stroke-width="1.1" stroke-linejoin="round"/><path d="M289.5 176.5 L293.5 172.5 L293.5 195.5 L289.5 199.5 Z" fill="#e2e2e2" stroke="#7a7a7a" stroke-width="1.1" stroke-linejoin="round"/><path d="M289.5 199.5 L293.5 195.5 L293.5 203.5 L289.5 207.5 Z" fill="#fff" stroke="#7a7a7a" stroke-width="1.1" stroke-linejoin="round"/><rect x="281.5" y="176.5" width="8.0" height="23.0" fill="#d4d4d4" stroke="#7a7a7a" stroke-width="1.1"/><rect x="281.5" y="199.5" width="8.0" height="8.0" fill="#fff" stroke="#7a7a7a" stroke-width="1.1"/><path d="M297.5 176.5 L301.5 172.5 L309.5 172.5 L305.5 176.5 Z" fill="#d4d4d4" stroke="#7a7a7a" stroke-width="1.1" stroke-linejoin="round"/><path d="M305.5 176.5 L309.5 172.5 L309.5 187.5 L305.5 191.5 Z" fill="#e2e2e2" stroke="#7a7a7a" stroke-width="1.1" stroke-linejoin="round"/><path d="M305.5 191.5 L309.5 187.5 L309.5 203.5 L305.5 207.5 Z" fill="#fff" stroke="#7a7a7a" stroke-width="1.1" stroke-linejoin="round"/><rect x="297.5" y="176.5" width="8.0" height="15.0" fill="#d4d4d4" stroke="#7a7a7a" stroke-width="1.1"/><rect x="297.5" y="191.5" width="8.0" height="16.0" fill="#fff" stroke="#7a7a7a" stroke-width="1.1"/><path d="M332.5 171.5 L332.5 197.5 L367.5 197.5" fill="none" stroke="#7a7a7a" stroke-width="1.1"/><path d="M332.5 197.5 L328.5 201.5" fill="none" stroke="#7a7a7a" stroke-width="1.1"/><path d="M338.5 175.5 L341.5 172.5 L347.5 172.5 L344.5 175.5 Z" fill="#d4d4d4" stroke="#7a7a7a" stroke-width="1.1" stroke-linejoin="round"/><path d="M344.5 175.5 L347.5 172.5 L347.5 200.5 L344.5 203.5 Z" fill="#e2e2e2" stroke="#7a7a7a" stroke-width="1.1" stroke-linejoin="round"/><rect x="338.5" y="175.5" width="6.0" height="28.0" fill="#d4d4d4" stroke="#7a7a7a" stroke-width="1.1"/><path d="M356.5 175.5 L359.5 172.5 L365.5 172.5 L362.5 175.5 Z" fill="#d4d4d4" stroke="#7a7a7a" stroke-width="1.1" stroke-linejoin="round"/><path d="M362.5 175.5 L365.5 172.5 L365.5 200.5 L362.5 203.5 Z" fill="#e2e2e2" stroke="#7a7a7a" stroke-width="1.1" stroke-linejoin="round"/><rect x="356.5" y="175.5" width="6.0" height="28.0" fill="#d4d4d4" stroke="#7a7a7a" stroke-width="1.1"/><path d="M331.5 189.5 L334.5 186.5 L340.5 186.5 L337.5 189.5 Z" fill="#fff" stroke="#7a7a7a" stroke-width="1.1" stroke-linejoin="round"/><path d="M337.5 189.5 L340.5 186.5 L340.5 204.5 L337.5 207.5 Z" fill="#fff" stroke="#7a7a7a" stroke-width="1.1" stroke-linejoin="round"/><rect x="331.5" y="189.5" width="6.0" height="18.0" fill="#fff" stroke="#7a7a7a" stroke-width="1.1"/><path d="M349.5 182.5 L352.5 179.5 L358.5 179.5 L355.5 182.5 Z" fill="#fff" stroke="#7a7a7a" stroke-width="1.1" stroke-linejoin="round"/><path d="M355.5 182.5 L358.5 179.5 L358.5 204.5 L355.5 207.5 Z" fill="#fff" stroke="#7a7a7a" stroke-width="1.1" stroke-linejoin="round"/><rect x="349.5" y="182.5" width="6.0" height="25.0" fill="#fff" stroke="#7a7a7a" stroke-width="1.1"/><path d="M160.5 249.5 L160.5 285.5 L199.5 285.5" fill="none" stroke="#7a7a7a" stroke-width="1.1"/><rect x="160.5" y="251.5" width="20.0" height="7.0" fill="#fff" stroke="#7a7a7a" stroke-width="1.1"/><rect x="160.5" y="258.5" width="30.0" height="7.0" fill="#d4d4d4" stroke="#7a7a7a" stroke-width="1.1"/><rect x="160.5" y="268.5" width="27.0" height="7.0" fill="#fff" stroke="#7a7a7a" stroke-width="1.1"/><rect x="160.5" y="275.5" width="20.0" height="7.0" fill="#d4d4d4" stroke="#7a7a7a" stroke-width="1.1"/><path d="M216.5 249.5 L216.5 285.5 L255.5 285.5" fill="none" stroke="#7a7a7a" stroke-width="1.1"/><rect x="216.5" y="253.5" width="11.0" height="10.0" fill="#fff" stroke="#7a7a7a" stroke-width="1.1"/><rect x="227.5" y="253.5" width="17.0" height="10.0" fill="#d4d4d4" stroke="#7a7a7a" stroke-width="1.1"/><rect x="216.5" y="270.5" width="17.0" height="10.0" fill="#fff" stroke="#7a7a7a" stroke-width="1.1"/><rect x="233.5" y="270.5" width="17.0" height="10.0" fill="#d4d4d4" stroke="#7a7a7a" stroke-width="1.1"/><path d="M272.5 249.5 L272.5 285.5 L311.5 285.5" fill="none" stroke="#7a7a7a" stroke-width="1.1"/><rect x="272.5" y="253.5" width="11.0" height="10.0" fill="#fff" stroke="#7a7a7a" stroke-width="1.1"/><rect x="283.5" y="253.5" width="23.0" height="10.0" fill="#d4d4d4" stroke="#7a7a7a" stroke-width="1.1"/><rect x="272.5" y="270.5" width="17.0" height="10.0" fill="#fff" stroke="#7a7a7a" stroke-width="1.1"/><rect x="289.5" y="270.5" width="17.0" height="10.0" fill="#d4d4d4" stroke="#7a7a7a" stroke-width="1.1"/><path d="M164.5 325.5 L164.5 362.5 L199.5 362.5" fill="none" stroke="#7a7a7a" stroke-width="1.1"/><path d="M164.5 362.5 L160.5 366.5" fill="none" stroke="#7a7a7a" stroke-width="1.1"/><path d="M161.5 337.5 L165.5 333.5 L191.5 333.5 L187.5 337.5 Z" fill="#e6e6e6" stroke="#7a7a7a" stroke-width="1.1" stroke-linejoin="round"/><path d="M187.5 337.5 L191.5 333.5 L191.5 339.5 L187.5 343.5 Z" fill="#e2e2e2" stroke="#7a7a7a" stroke-width="1.1" stroke-linejoin="round"/><rect x="161.5" y="337.5" width="26.0" height="6.0" fill="#d4d4d4" stroke="#7a7a7a" stroke-width="1.1"/><path d="M161.5 331.5 L164.5 328.5 L181.5 328.5 L178.5 331.5 Z" fill="#fff" stroke="#7a7a7a" stroke-width="1.1" stroke-linejoin="round"/><path d="M178.5 331.5 L181.5 328.5 L181.5 334.5 L178.5 337.5 Z" fill="#fff" stroke="#7a7a7a" stroke-width="1.1" stroke-linejoin="round"/><rect x="161.5" y="331.5" width="17.0" height="6.0" fill="#fff" stroke="#7a7a7a" stroke-width="1.1"/><path d="M161.5 354.5 L164.5 351.5 L183.5 351.5 L180.5 354.5 Z" fill="#e6e6e6" stroke="#7a7a7a" stroke-width="1.1" stroke-linejoin="round"/><path d="M180.5 354.5 L183.5 351.5 L183.5 357.5 L180.5 360.5 Z" fill="#e2e2e2" stroke="#7a7a7a" stroke-width="1.1" stroke-linejoin="round"/><rect x="161.5" y="354.5" width="19.0" height="6.0" fill="#d4d4d4" stroke="#7a7a7a" stroke-width="1.1"/><path d="M161.5 348.5 L164.5 345.5 L188.5 345.5 L185.5 348.5 Z" fill="#fff" stroke="#7a7a7a" stroke-width="1.1" stroke-linejoin="round"/><path d="M185.5 348.5 L188.5 345.5 L188.5 351.5 L185.5 354.5 Z" fill="#fff" stroke="#7a7a7a" stroke-width="1.1" stroke-linejoin="round"/><rect x="161.5" y="348.5" width="24.0" height="6.0" fill="#fff" stroke="#7a7a7a" stroke-width="1.1"/><path d="M222.5 325.5 L222.5 362.5 L253.5 362.5" fill="none" stroke="#7a7a7a" stroke-width="1.1"/><path d="M222.5 362.5 L219.5 365.5" fill="none" stroke="#7a7a7a" stroke-width="1.1"/><path d="M278.5 325.5 L278.5 362.5 L309.5 362.5" fill="none" stroke="#7a7a7a" stroke-width="1.1"/><path d="M278.5 362.5 L275.5 365.5" fill="none" stroke="#7a7a7a" stroke-width="1.1"/><path d="M217.5 334.5 L221.5 330.5 L229.5 330.5 L225.5 334.5 Z" fill="#fff" stroke="#7a7a7a" stroke-width="1.1" stroke-linejoin="round"/><path d="M225.5 334.5 L229.5 330.5 L244.5 330.5 L240.5 334.5 Z" fill="#e6e6e6" stroke="#7a7a7a" stroke-width="1.1" stroke-linejoin="round"/><path d="M240.5 334.5 L244.5 330.5 L244.5 338.5 L240.5 342.5 Z" fill="#e2e2e2" stroke="#7a7a7a" stroke-width="1.1" stroke-linejoin="round"/><rect x="217.5" y="334.5" width="8.0" height="8.0" fill="#fff" stroke="#7a7a7a" stroke-width="1.1"/><rect x="225.5" y="334.5" width="15.0" height="8.0" fill="#d4d4d4" stroke="#7a7a7a" stroke-width="1.1"/><path d="M217.5 350.5 L221.5 346.5 L237.5 346.5 L233.5 350.5 Z" fill="#fff" stroke="#7a7a7a" stroke-width="1.1" stroke-linejoin="round"/><path d="M233.5 350.5 L237.5 346.5 L252.5 346.5 L248.5 350.5 Z" fill="#e6e6e6" stroke="#7a7a7a" stroke-width="1.1" stroke-linejoin="round"/><path d="M248.5 350.5 L252.5 346.5 L252.5 354.5 L248.5 358.5 Z" fill="#e2e2e2" stroke="#7a7a7a" stroke-width="1.1" stroke-linejoin="round"/><rect x="217.5" y="350.5" width="16.0" height="8.0" fill="#fff" stroke="#7a7a7a" stroke-width="1.1"/><rect x="233.5" y="350.5" width="15.0" height="8.0" fill="#d4d4d4" stroke="#7a7a7a" stroke-width="1.1"/><path d="M273.5 334.5 L277.5 330.5 L285.5 330.5 L281.5 334.5 Z" fill="#fff" stroke="#7a7a7a" stroke-width="1.1" stroke-linejoin="round"/><path d="M281.5 334.5 L285.5 330.5 L308.5 330.5 L304.5 334.5 Z" fill="#e6e6e6" stroke="#7a7a7a" stroke-width="1.1" stroke-linejoin="round"/><path d="M304.5 334.5 L308.5 330.5 L308.5 338.5 L304.5 342.5 Z" fill="#e2e2e2" stroke="#7a7a7a" stroke-width="1.1" stroke-linejoin="round"/><rect x="273.5" y="334.5" width="8.0" height="8.0" fill="#fff" stroke="#7a7a7a" stroke-width="1.1"/><rect x="281.5" y="334.5" width="23.0" height="8.0" fill="#d4d4d4" stroke="#7a7a7a" stroke-width="1.1"/><path d="M273.5 350.5 L277.5 346.5 L293.5 346.5 L289.5 350.5 Z" fill="#fff" stroke="#7a7a7a" stroke-width="1.1" stroke-linejoin="round"/><path d="M289.5 350.5 L293.5 346.5 L308.5 346.5 L304.5 350.5 Z" fill="#e6e6e6" stroke="#7a7a7a" stroke-width="1.1" stroke-linejoin="round"/><path d="M304.5 350.5 L308.5 346.5 L308.5 354.5 L304.5 358.5 Z" fill="#e2e2e2" stroke="#7a7a7a" stroke-width="1.1" stroke-linejoin="round"/><rect x="273.5" y="350.5" width="16.0" height="8.0" fill="#fff" stroke="#7a7a7a" stroke-width="1.1"/><rect x="289.5" y="350.5" width="15.0" height="8.0" fill="#d4d4d4" stroke="#7a7a7a" stroke-width="1.1"/></svg>
<div class="a" style="left:208px;top:85px;width:50px;height:54px;border:2px solid #ff0000"></div>
<div class="a" style="left:152px;top:374px;width:224px;height:1px;background:#e1e1e1"></div>
<svg style="left:154px;top:376px" width="20" height="20" viewBox="154 376 20 20">
<path d="M156.5 379 V393.5 H172" fill="none" stroke="#7a7a7a" stroke-width="1"/>
<rect x="158.9" y="383" width="1.8" height="10.5" fill="none" stroke="#7a7a7a" stroke-width="0.9"/>
<rect x="161.6" y="387.7" width="1.6" height="5.8" fill="#d4d4d4" stroke="#7a7a7a" stroke-width="0.9"/>
<rect x="164.5" y="383" width="1.8" height="10.5" fill="none" stroke="#7a7a7a" stroke-width="0.9"/>
<rect x="167.3" y="380.4" width="2" height="13.1" fill="#d4d4d4" stroke="#7a7a7a" stroke-width="0.9"/>
</svg>
<div class="t" style="left:184.10px;top:380.54px;font-size:12px;color:#4a4a4a;font-weight:normal;"><u style="text-decoration-thickness:1px;text-underline-offset:1px">M</u>ore Column Charts...</div>
<div class="a" style="left:62px;top:3px;width:55px;height:30.5px;border:2px solid #ff0000"></div>
<div class="a" style="left:105px;top:8px;width:22px;height:22px;border-radius:50%;background:#ee4141;box-shadow:0 1px 2px rgba(0,0,0,0.35)"></div>
<div class="t" style="left:106.00px;width:20px;text-align:center;top:11.93px;font-size:14.5px;color:#fff;font-weight:bold;font-family:'Liberation Serif',serif;">2</div>
<div class="a" style="left:128.8px;top:37.8px;width:22px;height:22px;border-radius:50%;background:#ee4141;box-shadow:0 1px 2px rgba(0,0,0,0.35)"></div>
<div class="t" style="left:129.80px;width:20px;text-align:center;top:41.73px;font-size:14.5px;color:#fff;font-weight:bold;font-family:'Liberation Serif',serif;">3</div>
<div class="a" style="left:247.8px;top:131px;width:22px;height:22px;border-radius:50%;background:#ee4141;box-shadow:0 1px 2px rgba(0,0,0,0.35)"></div>
<div class="t" style="left:248.80px;width:20px;text-align:center;top:134.93px;font-size:14.5px;color:#fff;font-weight:bold;font-family:'Liberation Serif',serif;">4</div>
<div class="a" style="left:728.8px;top:379.6px;width:22px;height:22px;border-radius:50%;background:#ee4141;box-shadow:0 1px 2px rgba(0,0,0,0.35)"></div>
<div class="t" style="left:729.80px;width:20px;text-align:center;top:383.53px;font-size:14.5px;color:#fff;font-weight:bold;font-family:'Liberation Serif',serif;">1</div>
<svg style="left:300px;top:520px" width="170" height="50" viewBox="300 520 170 50">
<rect x="306" y="525" width="147" height="33" fill="#fff" opacity="0.3"/>
<g opacity="0.35">
<path d="M323 528 L335 535 L335 549 L323 556 L311 549 L311 535 Z" fill="#9ab4e8"/>
<path d="M323 542 L335 535 L335 549 L323 556 Z" fill="#c9d6f0"/>
<path d="M323 542 L311 535 L323 528 L335 535 Z" fill="#7d9ee0"/>
</g>
<text x="341.5" y="546.6" font-family="Liberation Sans" font-size="22" font-weight="bold" fill="#9fb0e6" opacity="0.55" textLength="111" lengthAdjust="spacingAndGlyphs">exceldemy</text>
<text x="353.7" y="555" font-family="Liberation Sans" font-size="6.5" fill="#8a8a8a" opacity="0.4" textLength="82.6" lengthAdjust="spacing">EXCEL · DATA · BI</text>
</svg>
<div class="a" style="left:2px;top:132px;width:1px;height:440px;background:#f2f1ec"></div>
<div class="a" style="left:2px;top:571px;width:24px;height:1px;background:#f2f1ec"></div>
<div class="a" style="left:0;top:0;width:763px;height:1px;background:rgb(195,15,205)"></div>
<div class="a" style="left:1px;top:1px;width:761px;height:1px;background:rgb(120,10,110)"></div>
<div class="a" style="left:0;top:573px;width:763px;height:1px;background:rgb(100,50,250)"></div>
<div class="a" style="left:1px;top:572px;width:761px;height:1px;background:rgb(25,75,180)"></div>
<div class="a" style="left:0;top:0;width:1px;height:574px;background:linear-gradient(rgb(195,15,205),rgb(100,50,250))"></div>
<div class="a" style="left:762px;top:0;width:1px;height:574px;background:linear-gradient(rgb(195,15,205),rgb(100,50,250))"></div>
<div class="a" style="left:1px;top:1px;width:1px;height:572px;background:linear-gradient(rgb(120,10,110),rgb(55,20,115) 35%,rgb(25,75,180))"></div>
<div class="a" style="left:761px;top:1px;width:1px;height:572px;background:linear-gradient(rgb(120,10,110),rgb(55,20,115) 35%,rgb(25,75,180))"></div>
</body></html>
